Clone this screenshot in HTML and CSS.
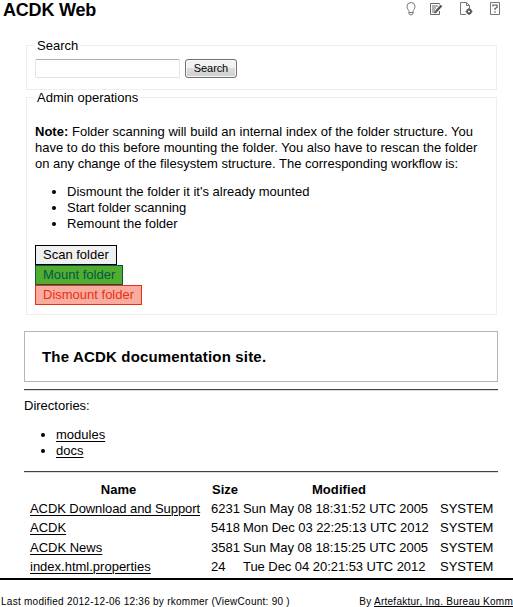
FILE: index.html
```html
<!DOCTYPE html>
<html lang="en">
<head>
<meta charset="utf-8">
<title>ACDK Web</title>
<link rel="stylesheet" href="styles.css">
</head>
<body>
<header class="header">
  <h1>ACDK Web</h1>
  <nav class="tools">
    <svg class="bulb" width="10" height="14" viewBox="0 0 10 14" fill="none" stroke="#777"><path d="M3 9.500C3 8 1 7 1 4.500a4 4 0 0 1 8 0C9 7 7 8 7 9.500v2.500q-2 2-4 0zM3 10.500h4"/></svg>
    <svg class="edit" width="14" height="14" viewBox="0 0 14 14" fill="none" stroke="#666"><path d="M10.500 2.500V1.500h-9v11h9V9M3 4h6M3 6h4M3 8h3M3 10h3"/><path d="M12.500 3.500L7 9.500" stroke="#555" stroke-width="2.400"/><path d="M5.500 11l2-.5-1.300-1.400z" fill="#555"/></svg>
    <svg class="gear" width="14" height="14" viewBox="0 0 14 14" fill="none" stroke="#777"><path d="M7 12.500H1.500v-12h6l3 3V6M7.500.5v3h3"/><circle cx="10" cy="9.500" r="2" stroke="#555" stroke-width="1.800"/><path d="M10 6v1M10 12v1M6.500 9.500h1M12.500 9.500h1" stroke="#555"/></svg>
    <svg class="help" width="10" height="13" viewBox="0 0 10 13" fill="none" stroke="#777"><path d="M.5.5h9v12h-9z"/><path d="M3 4.500V3h4v2.500L5 6.500V8M5 9.300v1.400" stroke="#555" stroke-width="1.200"/></svg>
  </nav>
</header>
<main class="content">
  <fieldset class="search">
    <legend>Search</legend>
    <div class="search-row"><input type="text" aria-label="Search text"><button type="button">Search</button></div>
  </fieldset>
  <fieldset class="admin">
    <legend>Admin operations</legend>
    <p class="note"><span class="first-line"><b>Note:</b> Folder scanning will build an internal index of the folder structure. You</span><br>have to do this before mounting the folder. You also have to rescan the folder<br>on any change of the filesystem structure. The corresponding workflow is:</p>
    <ul class="steps">
      <li>Dismount the folder it it's already mounted</li>
      <li>Start folder scanning</li>
      <li>Remount the folder</li>
    </ul>
    <div class="ops">
      <a class="op scan">Scan folder</a>
      <a class="op mount">Mount folder</a>
      <a class="op dismount">Dismount folder</a>
    </div>
  </fieldset>
  <h2 class="banner">The ACDK documentation site.</h2>
  <hr>
  <p class="dirs">Directories:</p>
  <ul class="dirlist">
    <li><a class="link">modules</a></li>
    <li><a class="link">docs</a></li>
  </ul>
  <hr>
  <table>
    <colgroup><col class="c1"><col class="c2"><col class="c3"><col class="c4"></colgroup>
    <tr><th>Name</th><th class="size">Size</th><th>Modified</th><th></th></tr>
    <tr><td><a class="link long">ACDK Download and Support</a></td><td>6231</td><td>Sun May 08 18:31:52 UTC 2005</td><td>SYSTEM</td></tr>
    <tr class="tall"><td><a class="link">ACDK</a></td><td>5418</td><td>Mon Dec 03 22:25:13 UTC 2012</td><td>SYSTEM</td></tr>
    <tr><td><a class="link">ACDK News</a></td><td>3581</td><td>Sun May 08 18:15:25 UTC 2005</td><td>SYSTEM</td></tr>
    <tr><td><a class="link">index.html.properties</a></td><td>24</td><td>Tue Dec 04 20:21:53 UTC 2012</td><td>SYSTEM</td></tr>
  </table>
</main>
<footer class="footer">
  <span>Last modified 2012-12-06 12:36 by rkommer (ViewCount: 90 )</span>
  <span>By <a class="link">Artefaktur, Ing. Bureau Komm</a></span>
</footer>
</body>
</html>
```

FILE: styles.css
```css
* { box-sizing: border-box; }
body { margin: 0; background: #fff; color: #000; font: 13px/16px "Liberation Sans", Arial, sans-serif; overflow: hidden; }
.header { display: flex; justify-content: space-between; height: 38px; padding: 0 13px 0 3px; }
h1 { margin: 0; font-size: 18px; line-height: 20px; letter-spacing: -0.2px; }
.tools { display: flex; align-items: flex-start; padding-top: 2px; }
.edit { margin-left: 13px; }
.gear { margin-left: 16px; }
.help { margin-left: 17px; }
.content { padding: 0 15px 0 24px; }
fieldset { margin: 0 1px 0 2px; border: 1px solid #eee; padding: 0 8px; min-width: 0; }
legend { height: 15px; padding: 0 2px; }
.search { height: 52px; }
.admin { height: 225px; }
.search-row { display: flex; gap: 5px; padding-top: 6px; }
input { width: 145px; height: 19px; border: 1px solid #e0e2ea; border-top-color: #abadb3; border-radius: 2px; padding: 0 3px; }
button { width: 52px; height: 19px; padding: 0; border: 1px solid #707070; border-radius: 3px; background: linear-gradient(#f2f2f2 0 50%, #dcdcdc 50%, #cfcfcf); box-shadow: inset 0 0 0 1px #f8f8f8; color: #000; font: 11px/15px "Liberation Sans", Arial, sans-serif; letter-spacing: -0.1px; }
.note { margin: 19px 0 12px; white-space: nowrap; }
.first-line { letter-spacing: 0.02px; }
ul { margin: 0; padding-left: 32px; }
.ops { display: flex; flex-direction: column; align-items: flex-start; margin-top: 13px; }
.op { height: 20px; border: 1px solid; padding: 1px 0 1px 7px; white-space: nowrap; }
.scan { width: 82px; background: #f0f0f0; border-color: #000; }
.mount { width: 88px; background: #51ac30; border-color: #00594a; color: #00594a; }
.dismount { width: 107px; background: #f8aca0; border-color: #e93012; color: #e93012; }
.banner { display: flex; align-items: center; height: 51px; margin: 16px 0 7px; border: 1px solid #b5b5b5; padding-left: 17px; font-size: 15px; letter-spacing: 0.17px; }
hr { height: 2px; margin: 0; border: 0; border-top: 1px solid #404040; background: #ddd; }
.dirs { margin: 7px 0 13px; }
.dirlist { margin-bottom: 12px; }
.link { text-decoration: underline; text-underline-offset: 2px; text-decoration-thickness: 1px; }
.long { letter-spacing: -0.08px; }
table { table-layout: fixed; width: 469px; margin: 7px 0 0 5px; border-collapse: collapse; white-space: nowrap; }
.c1 { width: 181px; }
.c2 { width: 32px; }
.c3 { width: 197px; }
.c4 { width: 59px; }
tr { height: 19px; }
.tall { height: 20px; }
th, td { padding: 0 1px; }
td:nth-child(3) { letter-spacing: -0.05px; }
th:first-child { padding-right: 3px; }
th:nth-child(3) { padding-right: 4px; letter-spacing: 0.1px; }
.size { text-align: left; padding-left: 2px; }
.footer { display: flex; justify-content: space-between; margin-top: 2px; border-top: 2px solid #000; padding: 14px 0 0 1px; font-size: 10px; letter-spacing: 0.26px; white-space: nowrap; }
.footer .link { text-underline-offset: 1px; text-decoration-skip-ink: none; }
```
